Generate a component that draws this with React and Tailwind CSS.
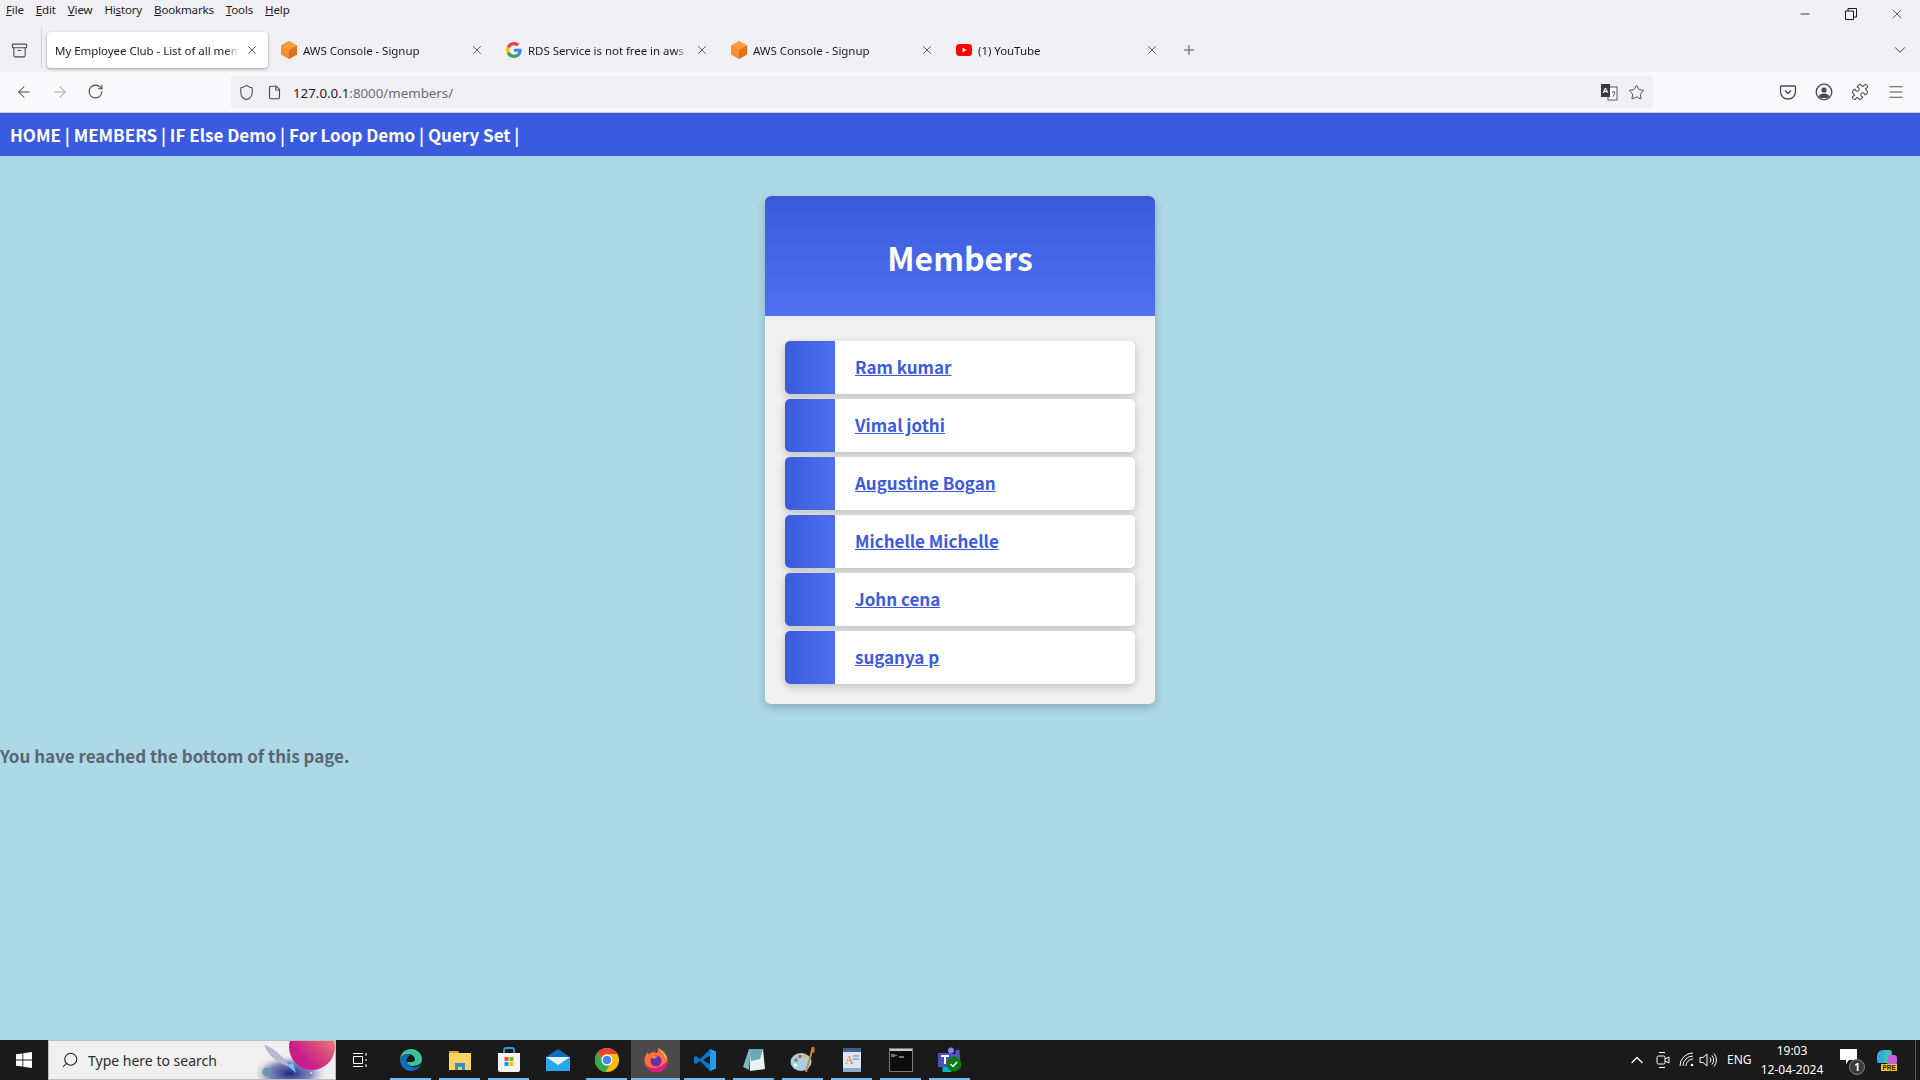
import React from 'react';
import {
  ArrowLeft, ArrowRight, RotateCw, Shield, File, Star, X, Plus, ChevronDown, ChevronUp, Minus, Menu, Search,
  Puzzle, Archive,
} from 'lucide-react';

const UI_FONT = "font-['Noto_Sans',sans-serif]";
const PAGE_FONT = "font-['Noto_Sans_CJK_SC','Noto_Sans',sans-serif]";

const menus = [
  ['F', 'ile'], ['E', 'dit'], ['V', 'iew'], ['Hi', 'story', 's'], ['B', 'ookmarks'], ['T', 'ools'], ['H', 'elp'],
];

const members = ['Ram kumar', 'Vimal jothi', 'Augustine Bogan', 'Michelle Michelle', 'John cena', 'suganya p'];

const AwsIcon = () => (
  <svg width="16" height="18" viewBox="0 0 16 18">
    <path d="M8 0 16 4.500V13.500L8 18 0 13.500V4.500Z" fill="#f68d2e" />
    <path d="M8 9 16 4.500V13.500L8 18Z" fill="#e0701a" />
    <path d="M8 0 16 4.500 8 9 0 4.500Z" fill="#fa9c3f" />
  </svg>
);

const GoogleIcon = () => (
  <svg width="16" height="16" viewBox="0 0 48 48">
    <path fill="#EA4335" d="M24 9.500c3.500 0 6.700 1.200 9.200 3.600l6.900-6.900C35.900 2.400 30.500 0 24 0 14.600 0 6.500 5.400 2.600 13.200l8 6.200C12.500 13.700 17.800 9.500 24 9.500z" />
    <path fill="#4285F4" d="M47 24.500c0-1.600-.1-3.100-.4-4.500H24v9h12.900c-.6 3-2.200 5.500-4.700 7.200l7.700 6C44.400 38 47 31.800 47 24.500z" />
    <path fill="#FBBC05" d="M10.600 28.600c-.5-1.400-.8-3-.8-4.600s.3-3.200.8-4.600l-8-6.200C.9 16.500 0 20.100 0 24s.9 7.500 2.600 10.800l8-6.200z" />
    <path fill="#34A853" d="M24 48c6.500 0 11.900-2.100 15.900-5.800l-7.700-6c-2.200 1.400-4.900 2.300-8.200 2.300-6.200 0-11.500-4.200-13.400-9.900l-8 6.200C6.500 42.600 14.600 48 24 48z" />
  </svg>
);

const YoutubeIcon = () => (
  <svg width="16" height="16" viewBox="0 0 16 16">
    <rect y="2" width="16" height="12" rx="3.500" fill="#f00" />
    <path d="M6.500 5.500 10.500 8l-4 2.500Z" fill="#fff" />
  </svg>
);

const tabs = [
  { title: 'My Employee Club - List of all mem', active: true },
  { title: 'AWS Console - Signup', icon: <AwsIcon /> },
  { title: 'RDS Service is not free in aws - (', icon: <GoogleIcon /> },
  { title: 'AWS Console - Signup', icon: <AwsIcon /> },
  { title: '(1) YouTube', icon: <YoutubeIcon /> },
];

const BrowserTab = ({ title, icon, active }) => (
  <div className="w-[225px] h-[36px] px-[2px] shrink-0">
    <div className={`h-full flex items-center pl-2 pr-[9px] rounded-[4px] ${active ? 'bg-white shadow-[0_1px_3px_rgba(0,0,0,0.35)]' : ''}`}>
      {icon && <span className="w-[22px] ml-[1px] flex shrink-0">{icon}</span>}
      <span className="flex-1 min-w-0 overflow-hidden whitespace-nowrap text-[11.500px] tracking-[-0.05px] leading-[16px] pt-[1px] text-[#1b1b1f] [mask-image:linear-gradient(to_left,transparent,black_14px)]">{title}</span>
      <X size={14} strokeWidth={1.4} className="text-[#3a3a40] shrink-0 ml-[6px]" />
    </div>
  </div>
);

const BrowserChrome = () => (
  <div className={`${UI_FONT} shrink-0`}>
    <div className="bg-[#f0f0f4] h-[72px]">
      <div className="h-[32px] flex items-start">
        <div className="flex gap-3 pl-[6px] pt-[2px] text-[11.500px] tracking-[-0.15px] leading-[16px] text-[#202024]">
          {menus.map(([a, b, u]) => (
            <span key={a + b}>
              {u ? <>Hi<u>s</u>tory</> : <><u>{a}</u>{b}</>}
            </span>
          ))}
        </div>
        <div className="ml-auto flex text-[#1a1a1a]">
          <span className="w-[46px] h-[28px] flex items-center justify-center"><Minus size={14} strokeWidth={1.4} /></span>
          <span className="w-[46px] h-[28px] flex items-center justify-center">
            <svg width="12" height="12" viewBox="0 0 12 12" fill="none" stroke="currentColor">
              <path d="M.5 3h8v8.500h-8z" /><path d="M3 3V.5h8.500V9H8.500" />
            </svg>
          </span>
          <span className="w-[46px] h-[28px] flex items-center justify-center"><X size={16} strokeWidth={1} /></span>
        </div>
      </div>
      <div className="h-[36px] flex items-center">
        <span className="w-[41px] flex justify-center shrink-0 pr-[2px]"><Archive size={17} strokeWidth={1.5} className="text-[#4a4a50]" /></span>
        <span className="w-px h-[40px] -mt-1 bg-[#d0d0d6] shrink-0 mr-[3px]" />
        <div className="flex">
          {tabs.map((tab, i) => <BrowserTab key={i} {...tab} />)}
        </div>
        <Plus size={16} strokeWidth={1.4} className="text-[#4a4a50] ml-[11px]" />
        <ChevronDown size={18} strokeWidth={1.4} className="text-[#5b5b66] ml-auto mr-[11px]" />
      </div>
    </div>
    <div className="h-[41px] bg-[#f9f9fb] border-b border-[#cfcfd4] flex items-center">
      <div className="w-[231px] flex shrink-0 pl-[15px] gap-[18px] text-[#4a4a50]">
        <ArrowLeft size={18} strokeWidth={1.4} />
        <ArrowRight size={18} strokeWidth={1.4} className="text-[#a8a8ad]" />
        <RotateCw size={17} strokeWidth={1.5} />
      </div>
      <div className="w-[1422px] h-[32px] rounded-[4px] bg-[#f0f0f4] flex items-center shrink-0">
        <Shield size={17} strokeWidth={1.5} className="ml-[7px] text-[#4a4a50]" />
        <File size={15} strokeWidth={1.8} className="ml-[12px] text-[#4a4a50]" />
        <span className="ml-[11px] text-[13.300px] text-[#1b1b1f] leading-[16px] pt-[1px]">127.0.0.1<span className="text-[#6b6b73]">:8000/members/</span></span>
        <svg width="18" height="18" viewBox="0 0 18 18" className="ml-auto mr-[10px]">
          <rect x="8" y="4" width="9" height="13" fill="#fff" stroke="#55555a" />
          <path d="M12 9h3l-2 5" fill="none" stroke="#55555a" />
          <rect x="1" y="1" width="9" height="13" fill="#38383d" />
          <text x="2.500" y="10" fontSize="8" fontWeight="700" fill="#fff" fontFamily="Liberation Sans">A</text>
        </svg>
        <Star size={17} strokeWidth={1.4} className="mr-[8px] text-[#4a4a50]" />
      </div>
      <div className="flex ml-auto text-[#4a4a50] pr-[15px] gap-[18px] items-center">
        <svg width="18" height="18" viewBox="0 0 18 18" fill="none" stroke="currentColor" strokeWidth="1.300">
          <path d="M2.500 3h13a1 1 0 0 1 1 1v5a7.500 7 0 0 1-15 0V4a1 1 0 0 1 1-1z" /><path d="M6 7.500 9 10.500l3-3" />
        </svg>
        <svg width="18" height="18" viewBox="0 0 18 18" fill="none" stroke="currentColor" strokeWidth="1.300">
          <circle cx="9" cy="9" r="7.800" />
          <circle cx="9" cy="7" r="2.600" fill="currentColor" stroke="none" />
          <path d="M3.500 13.200c1-2 3-2.800 5.500-2.800s4.500.8 5.500 2.800l-2 1.800h-7Z" fill="currentColor" stroke="none" />
        </svg>
        <Puzzle size={18} strokeWidth={1.4} />
        <Menu size={18} strokeWidth={1.3} />
      </div>
    </div>
  </div>
);

const MemberRow = ({ name }) => (
  <li className="h-[53px] flex bg-white rounded-[5px] overflow-hidden shadow-[0_3px_8px_rgba(0,0,0,0.2)]">
    <div className="w-[50px] shrink-0 bg-gradient-to-r from-[#3a5bdc] to-[#4e6ff0]" />
    <div className="flex items-center pl-5 pb-[2px]">
      <a href="#" className="text-[#3b5bdb] text-[17px] font-semibold underline leading-none">{name}</a>
    </div>
  </li>
);

const MembersPage = () => (
  <main className={`${PAGE_FONT} flex-1 bg-[#add8e6] min-h-0`}>
    <nav className="h-[43px] bg-[#3a5bdf] flex items-center pl-[10px] text-white text-[17px] font-semibold whitespace-pre">
      HOME | MEMBERS | IF Else Demo | For Loop Demo | Query Set |
    </nav>
    <section className="w-[390px] mx-auto mt-[40px] rounded-[6px] bg-[#f0f0f0] overflow-hidden shadow-[0_4px_10px_rgba(0,0,0,0.2)]">
      <header className="h-[120px] bg-gradient-to-b from-[#3a5bdc] to-[#4f70f0] flex items-center justify-center pt-[2px] text-white text-[32px] font-semibold">
        Members
      </header>
      <ul className="px-5 pt-[25px] pb-5 flex flex-col gap-[5px]">
        {members.map((m) => <MemberRow key={m} name={m} />)}
      </ul>
    </section>
    <p className="mt-[39px] text-[17px] font-semibold text-[#5a6672] leading-[26px]">You have reached the bottom of this page.</p>
  </main>
);

const EdgeIcon = () => (
  <svg width="24" height="24" viewBox="0 0 24 24">
    <path d="M12 1C5.500 1 1 6 1 12c1-4 4.500-6 8-6 4.500 0 7 3 7 5.500 0 1.500-1.500 2.500-3.500 2.500H8c0 2.500 3 4 6 4 3.500 0 6-1 8-3 1-2 1-3 1-4C23 5.500 18 1 12 1Z" fill="#3ac39b" />
    <path d="M1 12c0 6 5 11 11 11 4 0 8-2.500 10-6-2 1.500-5 2.500-8 2-4-.5-7-3.500-6.500-7 .5-2.500 2-4 4-5-1-.5-2-.8-3-.8C5 6 2 8.500 1 12Z" fill="#0f6cbd" />
  </svg>
);

const FolderIcon = () => (
  <svg width="24" height="22" viewBox="0 0 24 22">
    <path d="M1 2h9l2 3H1Z" fill="#e0a526" />
    <rect x="1" y="4" width="22" height="17" fill="#fcd462" />
    <path d="M7 21v-7h10v7h-3v-3h-4v3Z" fill="#2d8fd6" />
  </svg>
);

const StoreIcon = () => (
  <svg width="24" height="26" viewBox="0 0 24 26">
    <path d="M7 7V3a2 2 0 0 1 2-2h6a2 2 0 0 1 2 2v4" fill="none" stroke="#1fa4e8" strokeWidth="1.800" />
    <path d="M1 6h22v17a2 2 0 0 1-2 2H3a2 2 0 0 1-2-2Z" fill="#f4f4f4" />
    <rect x="7.500" y="10" width="4" height="4" fill="#f25022" />
    <rect x="12.500" y="10" width="4" height="4" fill="#7fba00" />
    <rect x="7.500" y="15" width="4" height="4" fill="#00a4ef" />
    <rect x="12.500" y="15" width="4" height="4" fill="#ffb900" />
  </svg>
);

const MailIcon = () => (
  <svg width="24" height="24" viewBox="0 0 24 24">
    <path d="M0 9 12 1l12 8v2H0Z" fill="#0f6cbd" />
    <rect y="9" width="24" height="14" fill="#28a8ea" />
    <path d="M0 9h24l-12 8Z" fill="#e6f3fb" />
  </svg>
);

const ChromeIcon = () => (
  <svg width="24" height="24" viewBox="0 0 24 24">
    <circle cx="12" cy="12" r="12" fill="#fbbc05" />
    <path d="M12 0a12 12 0 0 1 10.400 6H12a6 6 0 0 0-5.700 4L2.600 4.500A12 12 0 0 1 12 0Z" fill="#ea4335" />
    <path d="M2.600 4.500 8 14a6 6 0 0 0 6.500 3.500L10.500 24A12 12 0 0 1 2.600 4.500Z" fill="#34a853" />
    <circle cx="12" cy="12" r="5.500" fill="#fff" />
    <circle cx="12" cy="12" r="4.300" fill="#4285f4" />
  </svg>
);

const FirefoxIcon = () => (
  <svg width="24" height="26" viewBox="0 0 24 26">
    <path d="M12 25A11.500 11.500 0 0 1 1 10c1-2.500 2-4 3-5 0 1 .5 2 1 2.500C7 5 10 4 12 6c3 0 2-3 2-5 3 1.500 4 3 5 5 3 2 4.500 5 4.500 8A11.500 11.500 0 0 1 12 25Z" fill="#ff7139" />
    <path d="M14 1c4 2 9 6 9.500 12-1-2-2-3-3.500-4-.5-3-3-5-6-8Z" fill="#ffbd4f" />
    <path d="M12 25c-5 0-9-3-10-8 2 3 5 4 8 4 4 0 9-2 13-7 .5 6-5 11-11 11Z" fill="#e31587" />
    <circle cx="12" cy="14" r="5.500" fill="#6a2ea8" />
    <path d="M7 10c2-1.500 5-1.500 7 0-2 0-3 1-3.500 2Z" fill="#ff9640" />
  </svg>
);

const VscodeIcon = () => (
  <svg width="24" height="24" viewBox="0 0 24 24">
    <path d="M17 1 7 11 3 8 1 9v6l2 1 4-3 10 10 6-2.500V3.500Z" fill="#0078c8" />
    <path d="M17 1l6 2.500v17L17 23Z" fill="#1f9cf0" />
    <path d="M17 7.500 10 12l7 4.500Z" fill="#1a1a1a" />
  </svg>
);

const NotepadIcon = () => (
  <svg width="24" height="26" viewBox="0 0 24 26">
    <path d="M7 2h14l2 20-15 2Z" fill="#e9f1f2" />
    <path d="M7 2 1 20l6 3Z" fill="#7fb4bd" />
    <path d="M7 2h14l-3 10-9 2Z" fill="#6da9b5" />
  </svg>
);

const PaintIcon = () => (
  <svg width="26" height="28" viewBox="0 0 26 28">
    <ellipse cx="11" cy="16" rx="10.500" ry="9" fill="#a9cde3" />
    <circle cx="6" cy="14" r="1.800" fill="#3aa655" />
    <circle cx="10" cy="10.500" r="1.800" fill="#e44" />
    <circle cx="5.500" cy="19" r="1.800" fill="#fff" />
    <circle cx="15" cy="10" r="1.800" fill="#f4b400" />
    <path d="M23 1 16 26" stroke="#d08a3e" strokeWidth="2" />
    <path d="M21.500 1.500h3v5h-3Z" fill="#c87b32" />
  </svg>
);

const WordpadIcon = () => (
  <svg width="20" height="26" viewBox="0 0 20 26">
    <rect x="1" y="1" width="18" height="24" fill="#dce6f2" />
    <rect x="1" y="1" width="18" height="4" fill="#40618f" />
    <text x="3" y="17" fontSize="12" fill="#e8762c" fontFamily="Liberation Serif">A</text>
    <path d="M11 9h6M11 12h6" stroke="#5f87b8" />
    <rect x="1" y="21" width="18" height="4" fill="#8fa8c8" />
  </svg>
);

const CmdIcon = () => (
  <svg width="24" height="24" viewBox="0 0 24 24">
    <rect x=".5" y=".5" width="23" height="23" fill="#0c0c0c" stroke="#7b7b7b" />
    <rect x="1" y="1" width="22" height="2" fill="#c8c8c8" />
    <path d="M3 6v3M5 6v3M7 7v1M10 9h5" stroke="#d8d8d8" />
  </svg>
);

const TeamsIcon = () => (
  <svg width="28" height="28" viewBox="0 0 28 28">
    <circle cx="15" cy="4.500" r="3" fill="#7b83eb" />
    <circle cx="21.500" cy="6" r="2.400" fill="#5059c9" />
    <rect x="10" y="8" width="14" height="11" rx="1" fill="#5059c9" />
    <rect x="2" y="7" width="14" height="14" rx="1" fill="#4b53bc" />
    <path d="M5 10h8M9 10v8" stroke="#fff" strokeWidth="2" />
    <rect x="6.500" y="21" width="9" height="5" fill="#00b7c3" />
    <circle cx="18" cy="18" r="7.500" fill="#107c10" />
    <path d="M14.500 18l2.500 2.500 4-4.500" fill="none" stroke="#fff" strokeWidth="1.500" />
  </svg>
);

const taskbarApps = [
  { icon: <EdgeIcon />, open: true },
  { icon: <FolderIcon />, open: true },
  { icon: <StoreIcon />, open: true },
  { icon: <MailIcon /> },
  { icon: <ChromeIcon />, open: true },
  { icon: <FirefoxIcon />, open: true, active: true },
  { icon: <VscodeIcon />, open: true },
  { icon: <NotepadIcon />, open: true },
  { icon: <PaintIcon />, open: true },
  { icon: <WordpadIcon />, open: true },
  { icon: <CmdIcon />, open: true },
  { icon: <TeamsIcon />, open: true },
];

const SearchArt = () => (
  <svg width="78" height="38" viewBox="0 0 78 38" className="shrink-0">
    <defs>
      <radialGradient id="space" cx="0.42" cy="0.85" r="0.5">
        <stop offset="0" stopColor="#1f2580" />
        <stop offset="0.55" stopColor="#5a62ad" stopOpacity="0.75" />
        <stop offset="1" stopColor="#f0f0f0" stopOpacity="0" />
      </radialGradient>
      <linearGradient id="planet" x1="0" y1="1" x2="1" y2="0">
        <stop offset="0.3" stopColor="#c81d8a" />
        <stop offset="1" stopColor="#f39a6b" />
      </linearGradient>
    </defs>
    <rect width="78" height="38" fill="url(#space)" />
    <circle cx="55" cy="6" r="23" fill="url(#planet)" />
    <path d="M7 4c6 1 14 7 21 15l5 7-8-3C17 19 10 12 7 4Z" fill="#b9b9cc" />
    <path d="M30 24l9 8-3-10Z" fill="#6ec1f0" />
    <circle cx="10" cy="31" r="4.500" fill="#6f95a8" />
    <circle cx="54" cy="32" r="1" fill="#f3e3a8" />
    <circle cx="64" cy="32" r="1" fill="#f3e3a8" />
  </svg>
);

const Taskbar = () => (
  <footer className={`${UI_FONT} h-[40px] shrink-0 bg-[#1a1a1a] flex items-stretch text-white`}>
    <div className="w-[48px] flex items-center justify-center shrink-0">
      <svg width="16" height="16" viewBox="0 0 16 16" fill="#fff">
        <path d="M0 2.300 6.500 1.400V7.600H0ZM7.300 1.300 16 0V7.600H7.300ZM0 8.400H6.500V14.600L0 13.700ZM7.300 8.400H16V16L7.300 14.700Z" />
      </svg>
    </div>
    <div className="w-[288px] shrink-0 bg-[#f0f0f0] border border-[#bdbdbd] flex items-center overflow-hidden pl-[12px]">
      <Search size={18} strokeWidth={1.4} className="text-[#222] -scale-x-100" />
      <span className="ml-[9px] text-[14px] text-[#2b2b2b] flex-1 whitespace-nowrap">Type here to search</span>
      <SearchArt />
    </div>
    <div className="w-[50px] shrink-0 flex items-center justify-center pr-[3px]">
      <svg width="16" height="16" viewBox="0 0 16 16" fill="none" stroke="#fff">
        <path d="M1 1.500h10M1 14.500h10M1.500 4.500h9v7h-9zM14 1v3M14 7v2M14 12v3" />
      </svg>
    </div>
    <div className="flex">
      {taskbarApps.map((app, i) => (
        <div key={i} className={`w-[49px] relative flex items-center justify-center ${app.active ? 'bg-[#4a4a4a]' : ''}`}>
          {app.icon}
          {app.open && <span className={`absolute bottom-0 h-[2px] bg-[#76b9ed] ${app.active ? 'inset-x-0' : 'inset-x-[4px]'}`} />}
        </div>
      ))}
    </div>
    <div className="ml-auto flex items-center">
      <ChevronUp size={20} strokeWidth={1.5} className="mr-[9px]" />
      <svg width="14" height="20" viewBox="0 0 14 20" fill="none" stroke="#fff" className="mr-[9px]">
        <rect x="1" y="6" width="8" height="8" rx="1.500" /><path d="M9 9l4-2v6l-4-2M3 2.500h6M3 17.500h6" />
      </svg>
      <svg width="16" height="16" viewBox="0 0 16 16" fill="none" stroke="#fff" className="mr-[4px]">
        <path d="M1 14a13 13 0 0 1 13-13M4 14a10 10 0 0 1 10-10M7 14a7 7 0 0 1 7-7" />
        <circle cx="13" cy="13" r="1.300" fill="#fff" stroke="none" />
      </svg>
      <svg width="18" height="16" viewBox="0 0 18 16" fill="none" stroke="#fff" className="mr-[10px]">
        <path d="M1 5.500h3L8 2v12L4 10.500H1ZM11 5.500a4 4 0 0 1 0 5M13 3.500a7 7 0 0 1 0 9M15 1.500a10 10 0 0 1 0 13" />
      </svg>
      <span className="text-[12px] w-[28px] mr-[5px]">ENG</span>
      <div className="w-[64px] text-[12px] leading-[19px] text-center whitespace-nowrap mr-[16px]">
        <div>19:03</div>
        <div>12-04-2024</div>
      </div>
      <div className="w-[24px] h-[24px] relative mr-[12px]">
        <svg width="17" height="15" viewBox="0 0 17 15" fill="#fff" className="mt-[1px]"><path d="M0 0h17v11H9l-3 4v-4H0Z" /></svg>
        <span className="absolute right-[-1px] bottom-[-3px] w-[16px] h-[16px] rounded-full bg-[#3a3a3a] border border-[#888] flex items-center justify-center text-[10px] font-bold leading-none">1</span>
      </div>
      <svg width="22" height="24" viewBox="0 0 22 24" className="mr-[17px]">
        <path d="M1 8a6 6 0 0 1 6-6h3l-3 13H3a2 2 0 0 1-2-2Z" fill="#35a6e8" />
        <path d="M9 2h4a3 3 0 0 1 3 3l-2 10H7Z" fill="#38c8a8" />
        <path d="M12 7h6a3 3 0 0 1 3 3v4a3 3 0 0 1-3 3h-7Z" fill="#c45fd8" />
        <rect x="5" y="16" width="16" height="7" fill="#f5c518" />
        <text x="6.500" y="22" fontSize="6.500" fontWeight="700" fill="#222" fontFamily="Liberation Sans">PRE</text>
      </svg>
      <span className="w-px h-full bg-[#5a5a5a] mr-[4px]" />
    </div>
  </footer>
);

export default function App() {
  return (
    <div className="w-[1920px] h-[1080px] flex flex-col overflow-hidden">
      <BrowserChrome />
      <MembersPage />
      <Taskbar />
    </div>
  );
}
